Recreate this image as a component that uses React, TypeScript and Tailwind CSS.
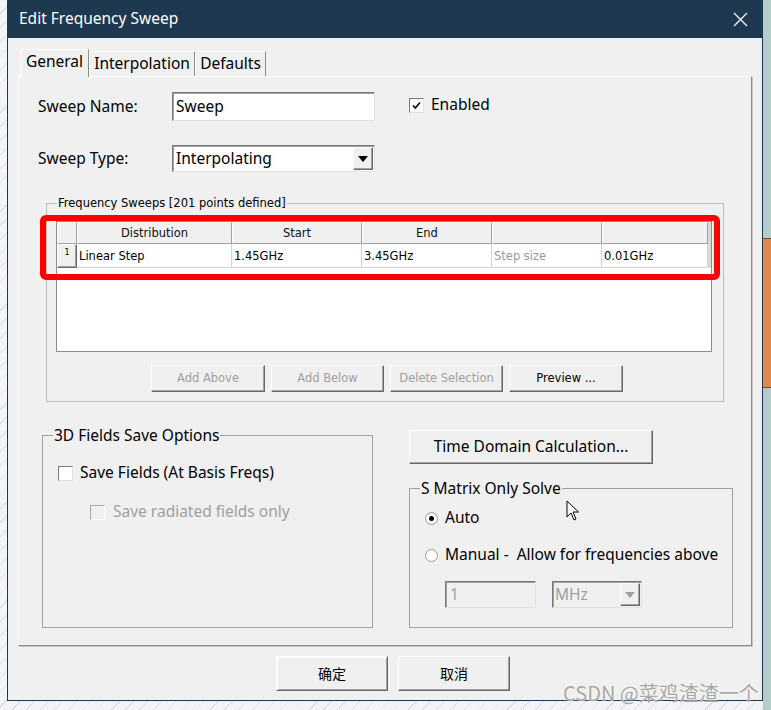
import React from "react";

const ui = "font-['Noto_Sans',sans-serif] text-[15.5px] text-black";
const small = "font-['DejaVu_Sans',sans-serif] text-[11.5px]";
const btn3d =
  "bg-[#f0f0f0] border border-t-white border-l-white border-r-[#696969] border-b-[#696969] shadow-[inset_-1px_-1px_0_#a0a0a0] flex items-center justify-center";
const sunken =
  "border border-t-[#7a7a7a] border-l-[#7a7a7a] border-r-[#e3e3e3] border-b-[#e3e3e3] shadow-[inset_1px_1px_0_#a0a0a0]";

function Check({ checked, disabled }: { checked?: boolean; disabled?: boolean }) {
  return (
    <div
      className={
        "w-[15px] h-[15px] shrink-0 flex items-center justify-center border " +
        (disabled
          ? "bg-[#f0f0f0] border-t-[#a8a8a8] border-l-[#a8a8a8] border-r-white border-b-white"
          : "bg-white border-t-[#7a7a7a] border-l-[#7a7a7a] border-r-[#e3e3e3] border-b-[#e3e3e3]")
      }
    >
      {checked && (
        <svg width="11" height="11" viewBox="0 0 11 11">
          <path d="M2 5.5 L4.3 8 L9 2.5" fill="none" stroke="#000" strokeWidth="1.6" />
        </svg>
      )}
    </div>
  );
}

function Radio({ on }: { on?: boolean }) {
  return (
    <div className="w-[13px] h-[13px] shrink-0 rounded-full bg-white border border-[#9a9a9a] flex items-center justify-center">
      {on && <div className="w-[5px] h-[5px] rounded-full bg-black" />}
    </div>
  );
}

function Caret({ color = "#000" }: { color?: string }) {
  return (
    <svg width="10" height="6" viewBox="0 0 10 6">
      <path d="M0 0 H10 L5 6 Z" fill={color} />
    </svg>
  );
}

function Group({
  title,
  className,
  children,
}: {
  title: string;
  className: string;
  children?: React.ReactNode;
}) {
  return (
    <div className={"relative border " + className}>
      <span className="absolute left-[10px] -top-[11px] bg-[#f0f0f0] px-[1px] leading-[20px]">{title}</span>
      {children}
    </div>
  );
}

const hdr =
  "h-full pt-[1px] bg-[#f0f0f0] border border-t-white border-l-white border-r-[#a0a0a0] border-b-[#a0a0a0] flex items-center justify-center text-[#111]";
const cell = "h-full pt-[2px] bg-white border-r border-b border-[#d4d4d4] flex items-center pl-[2px]";

export default function App() {
  return (
    <div className="relative w-[771px] h-[710px] overflow-hidden flex bg-[#eceef5]">
      {/* backdrop left */}
      <div className="w-[7px] h-full bg-[repeating-linear-gradient(135deg,#f3f4f8_0px,#f3f4f8_9px,#c9cde0_10px)]" />

      {/* dialog window */}
      <div className="flex flex-col w-[756px]">
        <div className="w-[756px] h-[701px] border border-[#1e3850] border-t-0 bg-[#f0f0f0] flex flex-col">
          <div className="h-[38px] bg-[#1e3850] flex items-center justify-between pl-[11px] pr-[14px] font-['Noto_Sans',sans-serif] text-[15.5px] text-white">
            <span>Edit Frequency Sweep</span>
            <svg width="15" height="15" viewBox="0 0 15 15">
              <path d="M1 1 L14 14 M14 1 L1 14" stroke="#fff" strokeWidth="1.3" />
            </svg>
          </div>

          <div className={"flex flex-col pt-[11px] " + ui}>
            {/* tabs */}
            <div className="flex items-end h-[27px] ml-[12px]">
              <div className="relative z-10 h-[28px] -mb-px w-[69px] pb-[3px] bg-[#f0f0f0] border border-b-0 border-t-white border-l-white border-r-[#8c8c8c] flex items-center justify-center">
                General
              </div>
              <div className="h-[25px] w-[106px] border border-b-0 border-t-white border-l-white border-r-[#8c8c8c] flex items-center justify-center">
                Interpolation
              </div>
              <div className="h-[25px] w-[71px] border border-b-0 border-t-white border-l-white border-r-[#8c8c8c] flex items-center justify-center">
                Defaults
              </div>
            </div>

            {/* tab panel */}
            <div className="ml-[10px] w-[734px] h-[570px] border border-t-white border-l-white border-r-[#8c8c8c] border-b-[#8c8c8c] shadow-[1px_1px_0_#c8c8c8] flex flex-col">
              <div className="flex items-center mt-[15px] pl-[19px]">
                <span className="w-[134px]">Sweep Name:</span>
                <div className={"w-[203px] h-[29px] bg-white flex items-center pl-[3px] " + sunken}>Sweep</div>
                <div className="flex items-center ml-[34px] -mt-[3px] gap-[7px]">
                  <Check checked />
                  <span>Enabled</span>
                </div>
              </div>

              <div className="flex items-center mt-[24px] pl-[19px]">
                <span className="w-[134px]">Sweep Type:</span>
                <div className={"w-[203px] h-[27px] bg-white flex items-center justify-between pl-[3px] pr-[1px] " + sunken}>
                  <span>Interpolating</span>
                  <div className={"w-[20px] h-[23px] " + btn3d}>
                    <Caret />
                  </div>
                </div>
              </div>

              {/* Frequency sweeps group */}
              <Group
                title="Frequency Sweeps [201 points defined]"
                className={"mt-[31px] ml-[27px] w-[678px] h-[199px] border-[#bdbdbd] flex flex-col " + small}
              >
                <div className="mt-[17px] ml-[9px] w-[656px] h-[131px] border border-[#8c8c8c] bg-white flex flex-col">
                  <div className="flex h-[22px]">
                    <div className={hdr + " w-[20px]"} />
                    <div className={hdr + " w-[155px]"}>Distribution</div>
                    <div className={hdr + " w-[130px]"}>Start</div>
                    <div className={hdr + " w-[130px]"}>End</div>
                    <div className={hdr + " w-[110px]"} />
                    <div className={hdr + " w-[106px]"} />
                    <div className="flex-1 bg-[#d8d8d8]" />
                  </div>
                  <div className="flex h-[24px]">
                    <div className={"w-[20px] h-full " + btn3d + " items-start pt-[2px] text-[8px]"}>1</div>
                    <div className={cell + " w-[155px]"}>Linear Step</div>
                    <div className={cell + " w-[130px]"}>1.45GHz</div>
                    <div className={cell + " w-[130px]"}>3.45GHz</div>
                    <div className={cell + " w-[110px] text-[#9a9a9a]"}>Step size</div>
                    <div className={cell + " w-[106px]"}>0.01GHz</div>
                    <div className="flex-1 bg-[#d8d8d8]" />
                  </div>
                </div>
                <div className="flex justify-center gap-[6px] mt-[13px] pl-[4px]">
                  <div className={"w-[114px] h-[27px] text-[#a0a0a0] " + btn3d}>Add Above</div>
                  <div className={"w-[113px] h-[27px] text-[#a0a0a0] " + btn3d}>Add Below</div>
                  <div className={"w-[113px] h-[27px] text-[#a0a0a0] " + btn3d}>Delete Selection</div>
                  <div className={"w-[114px] h-[27px] text-black " + btn3d}>Preview ...</div>
                </div>
              </Group>

              {/* lower row */}
              <div className="flex mt-[28px]">
                <Group title="3D Fields Save Options" className="ml-[23px] mt-[5px] w-[331px] h-[193px] border-[#a0a0a0]">
                  <div className="flex items-center h-[20px] mt-[27px] ml-[15px] gap-[7px]">
                    <Check />
                    <span>Save Fields (At Basis Freqs)</span>
                  </div>
                  <div className="flex items-center h-[20px] mt-[19px] ml-[47px] gap-[8px] text-[#a0a0a0]">
                    <Check disabled />
                    <span>Save radiated fields only</span>
                  </div>
                </Group>

                <div className="flex flex-col ml-[36px]">
                  <div className={"w-[244px] h-[34px] " + btn3d}>Time Domain Calculation...</div>
                  <Group title="S Matrix Only Solve" className="mt-[24px] w-[324px] h-[140px] border-[#a0a0a0]">
                    <div className="flex items-center h-[20px] mt-[19px] ml-[15px] gap-[7px]">
                      <Radio on />
                      <span>Auto</span>
                    </div>
                    <div className="flex items-center h-[20px] mt-[17px] ml-[15px] gap-[7px]">
                      <Radio />
                      <span className="whitespace-pre">Manual -  Allow for frequencies above</span>
                    </div>
                    <div className="flex items-center mt-[16px] ml-[35px] gap-[16px] text-[#a0a0a0]">
                      <div className={"w-[91px] h-[27px] bg-[#f0f0f0] flex items-center pl-[4px] " + sunken}>1</div>
                      <div className={"w-[90px] h-[27px] bg-[#f0f0f0] flex items-center justify-between pl-[2px] pr-[1px] " + sunken}>
                        <span>MHz</span>
                        <div className={"w-[20px] h-[23px] " + btn3d}>
                          <Caret color="#a0a0a0" />
                        </div>
                      </div>
                    </div>
                  </Group>
                </div>
              </div>
            </div>

            {/* OK / Cancel */}
            <div className="flex gap-[10px] mt-[10px] pl-[268px] font-['Noto_Sans_CJK_SC',sans-serif] text-[14px]">
              <div className={"w-[112px] h-[35px] border-[#3c3c3c] " + btn3d + " border-r-[#202020] border-b-[#202020] border-t-[#6a6a6a] border-l-[#6a6a6a] shadow-[inset_1px_1px_0_#fff,inset_-1px_-1px_0_#a0a0a0]"}>确定</div>
              <div className={"w-[112px] h-[35px] " + btn3d}>取消</div>
            </div>
          </div>
        </div>
        <div className="flex-1 bg-[repeating-linear-gradient(135deg,#f3f4f8_0px,#f3f4f8_9px,#c9cde0_10px)]" />
      </div>

      {/* backdrop right */}
      <div className="w-[8px] h-full flex flex-col">
        <div className="h-[238px] bg-[#b4cdca]" />
        <div className="h-[150px] bg-[#df8a4c] border-t border-b border-[#7a4a2a]" />
        <div className="flex-1 bg-[#b4cdca]" />
      </div>

      {/* red highlight */}
      <div className="absolute left-[40px] top-[215px] w-[680px] h-[65px] border-[6px] border-[#ff0000] rounded-[6px]" />

      {/* mouse cursor */}
      <svg className="absolute left-[566px] top-[500px]" width="14" height="22" viewBox="0 0 14 22">
        <path d="M1 1 L1 17 L5 13 L8 20 L10 19 L7 12 L12.5 12 Z" fill="#fff" stroke="#000" strokeWidth="1" strokeLinejoin="round" />
      </svg>

      {/* watermark */}
      <div className="absolute left-[563px] top-[678px] font-['Noto_Sans_CJK_SC',sans-serif] text-[20px] text-[#a8a8a8] [text-shadow:0_0_2px_#fff]">
        CSDN @菜鸡渣渣一个
      </div>
    </div>
  );
}
